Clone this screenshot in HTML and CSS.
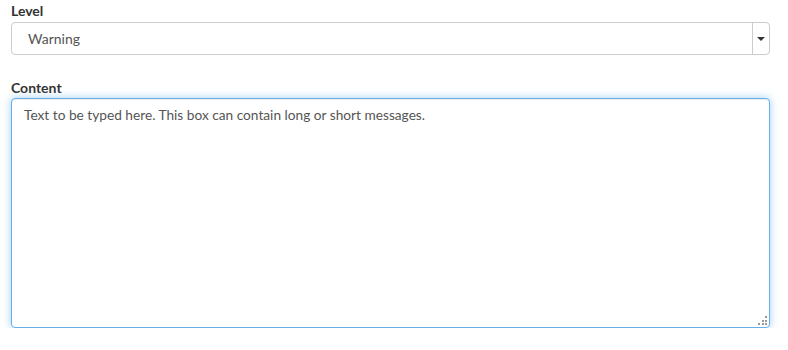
FILE: index.html
```html
<!DOCTYPE html>
<html>
<head>
<meta charset="utf-8">
<link rel="stylesheet" href="styles.css">
</head>
<body>
<div class="form">
  <div class="group">
    <label class="lbl">Level</label>
    <div class="select">
      <span class="value">Warning</span>
      <span class="toggle"><span class="caret"></span></span>
    </div>
  </div>
  <div class="group group2">
    <label class="lbl lbl2">Content</label>
    <div class="area-wrap">
      <textarea class="area">Text to be typed here. This box can contain long or short messages.</textarea>
      <svg class="grip" width="9" height="9" viewBox="0 0 9 9">
        <rect x="7" y="0" width="2" height="2" fill="#999"/>
        <rect x="4" y="4" width="2" height="2" fill="#999"/>
        <rect x="7" y="4" width="2" height="2" fill="#999"/>
        <rect x="0" y="7" width="2" height="2" fill="#999"/>
        <rect x="4" y="7" width="2" height="2" fill="#999"/>
        <rect x="7" y="7" width="2" height="2" fill="#999"/>
      </svg>
    </div>
  </div>
</div>
</body>
</html>
```
FILE: styles.css
```css
html, body { margin: 0; padding: 0; background: #fff; }
body { font-family: Lato, "Open Sans", sans-serif; color: #333; }
.form { padding: 2px 18px 0 11px; }
.group { display: flex; flex-direction: column; }
.group2 { margin-top: 24px; }
.lbl { font-weight: bold; font-size: 14px; line-height: 17px; margin-bottom: 3px; color: #333; }
.lbl2 { margin-bottom: 2px; }
.select {
  height: 33px; box-sizing: border-box; border: 1px solid #ccc; border-radius: 4px;
  display: flex; align-items: stretch; background: #fff;
}
.value { flex: 1; display: flex; align-items: center; padding-left: 16px; font-size: 14px; color: #555; }
.toggle { width: 16px; border-left: 1px solid #ccc; display: flex; align-items: center; justify-content: center; }
.caret { width: 0; height: 0; border-left: 4px solid transparent; border-right: 4px solid transparent; border-top: 4px solid #333; }
.area-wrap { position: relative; }
.area {
  display: block; box-sizing: border-box; width: 100%; height: 230px; margin: 0;
  border: 1px solid #66afe9; border-radius: 4px; outline: none; resize: none;
  box-shadow: inset 0 1px 1px rgba(0,0,0,.075), 0 0 8px rgba(102,175,233,.6);
  padding: 6px 12px; font-family: Lato, "Open Sans", sans-serif; font-size: 13.7px; line-height: 20px; color: #555;
}
.grip { position: absolute; right: 3px; bottom: 3px; }
```
